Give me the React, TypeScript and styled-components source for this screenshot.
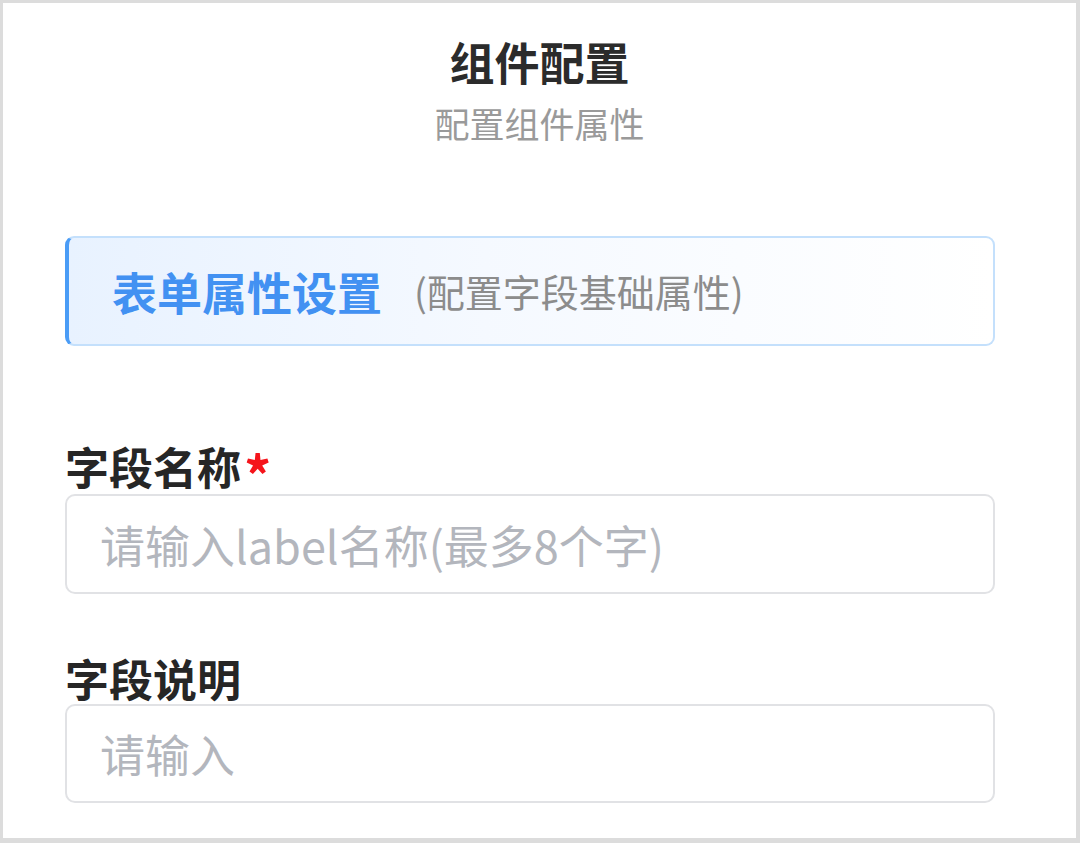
import React from "react";
import styled, { createGlobalStyle } from "styled-components";

const GlobalStyle = createGlobalStyle`
  html, body {
    margin: 0;
    padding: 0;
    background: #ffffff;
  }
  * {
    box-sizing: border-box;
  }
`;

const Frame = styled.div`
  width: 1080px;
  height: 843px;
  border: 3px solid #dcdcdc;
  border-right-width: 4px;
  border-bottom-width: 5px;
  background: #ffffff;
  padding-top: 29px;
  font-family: "Noto Sans CJK SC", "Noto Sans", sans-serif;
  display: flex;
  flex-direction: column;
`;

const Header = styled.header`
  display: flex;
  flex-direction: column;
  align-items: center;
  gap: 11px;
`;

const Title = styled.h1`
  margin: 0;
  font-size: 45px;
  line-height: 60px;
  font-weight: 700;
  color: #2b2b2b;
`;

const Subtitle = styled.p`
  margin: 0;
  font-size: 35px;
  line-height: 40px;
  font-weight: 400;
  color: #9a9a9a;
`;

const Body = styled.main`
  width: 930px;
  margin-left: 62px;
  display: flex;
  flex-direction: column;
`;

const SectionCard = styled.div`
  margin-top: 93px;
  height: 110px;
  border: 2px solid #c4e0fc;
  border-left: 4px solid #4a9cf6;
  border-radius: 9px;
  background: linear-gradient(90deg, #e8f2ff 0%, #f5f9ff 45%, #ffffff 100%);
  display: flex;
  align-items: center;
  gap: 32px;
  padding-left: 43px;
`;

const SectionTitle = styled.span`
  font-size: 45px;
  font-weight: 700;
  color: #4291f2;
  line-height: 1;
`;

const SectionHint = styled.span`
  font-size: 38px;
  color: #8c8c8c;
  line-height: 1;
`;

const Field = styled.div<{ $top: number }>`
  margin-top: ${(p) => p.$top}px;
  display: flex;
  flex-direction: column;
  gap: 1px;
`;

const Label = styled.label`
  font-size: 44px;
  line-height: 50px;
  font-weight: 700;
  color: #262626;
  display: flex;
  align-items: center;
`;

const Required = styled.span`
  color: #f5141b;
  font-size: 54px;
  font-weight: 700;
  margin-left: 3px;
  line-height: 1;
  position: relative;
  top: 8px;
`;

const Input = styled.input<{ $h: number }>`
  width: 100%;
  height: ${(p) => p.$h}px;
  border: 2px solid #e1e2e5;
  border-radius: 10px;
  padding: 0 33px;
  font-family: inherit;
  font-size: 45px;
  color: #333;
  background: #ffffff;
  outline: none;
  &::placeholder {
    color: #b3b6bd;
  }
`;

export default function App() {
  return (
    <>
      <GlobalStyle />
      <Frame>
        <Header>
          <Title>组件配置</Title>
          <Subtitle>配置组件属性</Subtitle>
        </Header>

        <Body>
          <SectionCard>
            <SectionTitle>表单属性设置</SectionTitle>
            <SectionHint>(配置字段基础属性)</SectionHint>
          </SectionCard>

          <Field $top={93}>
            <Label>
              字段名称<Required>*</Required>
            </Label>
            <Input $h={100} placeholder="请输入label名称(最多8个字)" />
          </Field>

          <Field $top={59}>
            <Label>字段说明</Label>
            <Input $h={99} placeholder="请输入" />
          </Field>
        </Body>
      </Frame>
    </>
  );
}
